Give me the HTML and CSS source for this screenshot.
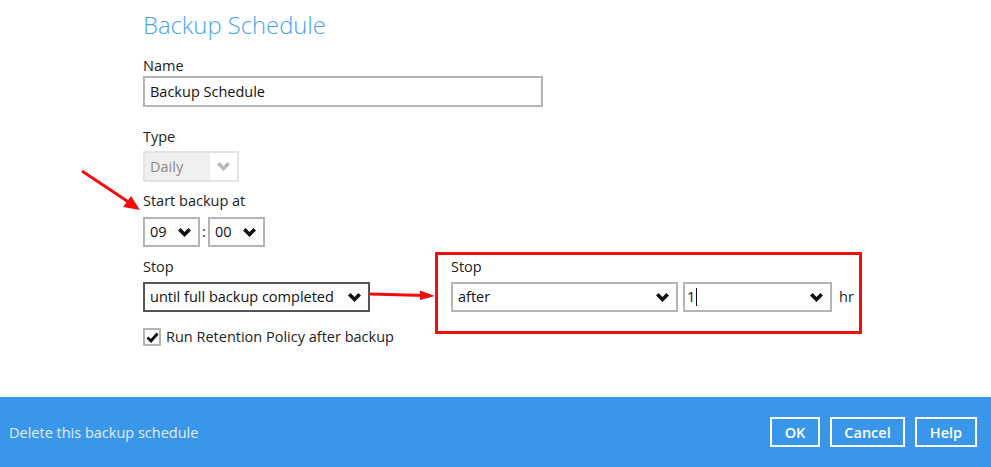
FILE: index.html
```html
<!DOCTYPE html>
<html>
<head>
<meta charset="utf-8">
<link rel="stylesheet" href="styles.css">
</head>
<body>
<div class="page">
  <main class="form">
    <h1 class="title">Backup Schedule</h1>

    <div class="field">
      <div class="label">Name</div>
      <div class="textbox">Backup Schedule</div>
    </div>

    <div class="field field-type">
      <div class="label">Type</div>
      <div class="select select-disabled">
        <span class="select-text">Daily</span>
        <span class="chev-box"><svg class="chev" width="13" height="9" viewBox="0 0 13 9"><polygon points="0,2.6 2.6,0 6.5,3.9 10.4,0 13,2.6 6.5,9"/></svg></span>
      </div>
    </div>

    <div class="field field-start">
      <div class="label">Start backup at</div>
      <div class="time-row">
        <div class="select select-time">
          <span class="select-text">09</span>
          <svg class="chev" width="13" height="9" viewBox="0 0 13 9"><polygon points="0,2.6 2.6,0 6.5,3.9 10.4,0 13,2.6 6.5,9"/></svg>
        </div>
        <span class="colon">:</span>
        <div class="select select-time">
          <span class="select-text">00</span>
          <svg class="chev" width="13" height="9" viewBox="0 0 13 9"><polygon points="0,2.6 2.6,0 6.5,3.9 10.4,0 13,2.6 6.5,9"/></svg>
        </div>
      </div>
      <svg class="annot-diag" width="70" height="50" viewBox="0 0 70 50">
        <line x1="2" y1="2" x2="50" y2="34" stroke="#f20d0d" stroke-width="3"/>
        <polygon points="60,41 43,38 51,27" fill="#f20d0d"/>
      </svg>
    </div>

    <div class="stop-row">
      <div class="field field-stop">
        <div class="label">Stop</div>
        <div class="select select-until">
          <span class="select-text">until full backup completed</span>
          <svg class="chev" width="13" height="9" viewBox="0 0 13 9"><polygon points="0,2.6 2.6,0 6.5,3.9 10.4,0 13,2.6 6.5,9"/></svg>
        </div>
      </div>
      <svg class="annot-line" width="66" height="12" viewBox="0 0 66 12">
        <line x1="0" y1="5" x2="54" y2="6.5" stroke="#f20d0d" stroke-width="3"/>
        <polygon points="50,1.5 65,7 50,11" fill="#f20d0d"/>
      </svg>
      <div class="field field-after">
        <div class="label">Stop</div>
        <div class="after-row">
          <div class="select select-after">
            <span class="select-text">after</span>
            <svg class="chev" width="13" height="9" viewBox="0 0 13 9"><polygon points="0,2.6 2.6,0 6.5,3.9 10.4,0 13,2.6 6.5,9"/></svg>
          </div>
          <div class="select select-hours">
            <span class="select-text">1<span class="caret"></span></span>
            <svg class="chev" width="13" height="9" viewBox="0 0 13 9"><polygon points="0,2.6 2.6,0 6.5,3.9 10.4,0 13,2.6 6.5,9"/></svg>
          </div>
          <span class="unit">hr</span>
        </div>
      </div>
    </div>

    <div class="check-row">
      <span class="checkbox"><svg width="13" height="11" viewBox="0 0 13 11"><polyline points="1.5,5.5 5,9 11.5,1.5" fill="none" stroke="#111" stroke-width="2.8"/></svg></span>
      <span class="check-label">Run Retention Policy after backup</span>
    </div>
  </main>

  <footer class="footer">
    <span class="footer-link">Delete this backup schedule</span>
    <div class="buttons">
      <span class="btn btn-ok">OK</span>
      <span class="btn btn-cancel">Cancel</span>
      <span class="btn btn-help">Help</span>
    </div>
  </footer>
</div>
</body>
</html>
```

FILE: styles.css
```css
* { box-sizing: border-box; }
html, body { margin: 0; padding: 0; background: #fff; }
body {
  font-family: "Open Sans", "Noto Sans", sans-serif;
  font-size: 14.5px;
  color: #222;
}
.page {
  height: 467px;
  display: flex;
  flex-direction: column;
  overflow: hidden;
}
.form {
  flex: 1;
  padding: 9px 0 0 143px;
  display: flex;
  flex-direction: column;
  align-items: flex-start;
}
.title {
  margin: 0 0 15px 0;
  font-size: 23.8px;
  line-height: 32px;
  font-weight: 300;
  color: #4aa3f0;
}
.field { display: flex; flex-direction: column; align-items: flex-start; position: relative; }
.label { line-height: 20px; height: 20px; color: #222; }
.textbox {
  width: 400px;
  height: 31px;
  border: 2px solid #b4b4b4;
  padding: 0 5px;
  line-height: 27px;
  color: #111;
}
.field-type { margin-top: 20px; }
.field-type .label { margin-bottom: 4px; }
.field-start { margin-top: 9px; }
.field-start .label { margin-bottom: 6px; }

.select {
  display: flex;
  align-items: center;
  justify-content: space-between;
  height: 30px;
  border: 2px solid #b4b4b4;
  padding: 0 7px 0 5px;
  background: #fff;
  color: #111;
}
.select-text { line-height: 26px; white-space: nowrap; }
.chev { display: block; fill: #111; flex-shrink: 0; }

.select-disabled {
  width: 96px;
  height: 31px;
  background: #efefef;
  border-color: #e4e4e4;
  padding: 0 0 0 5px;
  color: #8a8a8a;
}
.chev-box {
  width: 27px;
  align-self: stretch;
  background: #fff;
  display: flex;
  align-items: center;
  justify-content: center;
}
.chev-box .chev { fill: #b8b8b8; }

.time-row { display: flex; align-items: center; }
.select-time { width: 57px; }
.colon { width: 8px; text-align: center; line-height: 20px; }

.annot-diag {
  position: absolute;
  left: -63px;
  top: -22px;
}

.stop-row {
  margin-top: 10px;
  display: flex;
  align-items: flex-start;
}
.field-stop .label { margin-bottom: 5px; }
.select-until {
  width: 227px;
  border-color: #555;
}
.annot-line { margin-top: 32px; flex-shrink: 0; }
.field-after { margin-left: 15px; }
.field-after::before {
  content: "";
  position: absolute;
  left: -16px;
  top: -5px;
  right: -8px;
  bottom: -22px;
  border: 3px solid #f20d0d;
  pointer-events: none;
}
.field-after .label { margin-bottom: 5px; }
.after-row { display: flex; align-items: center; }
.select-after { width: 227px; }
.select-hours { width: 149px; margin-left: 5px; padding-left: 2px; }
.caret {
  display: inline-block;
  width: 1px;
  height: 18px;
  background: #111;
  vertical-align: -4px;
  margin-left: 1px;
}
.unit { margin-left: 7px; line-height: 20px; }

.check-row {
  margin-top: 15px;
  display: flex;
  align-items: center;
}
.checkbox {
  width: 18px;
  height: 18px;
  border: 2px solid #b4b4b4;
  display: flex;
  align-items: center;
  justify-content: center;
  background: #fff;
}
.check-label { margin-left: 5px; line-height: 20px; }

.footer {
  height: 70px;
  flex-shrink: 0;
  background: #3a96ea;
  display: flex;
  align-items: center;
  justify-content: space-between;
  padding: 0 14px 0 9px;
}
.footer-link { color: #e2eefb; }
.buttons { display: flex; gap: 10px; }
.btn {
  height: 30px;
  border: 2px solid #fff;
  color: #fff;
  font-weight: 600;
  display: flex;
  align-items: center;
  justify-content: center;
}
.btn-ok { width: 50px; }
.btn-cancel { width: 75px; }
.btn-help { width: 62px; }
```
